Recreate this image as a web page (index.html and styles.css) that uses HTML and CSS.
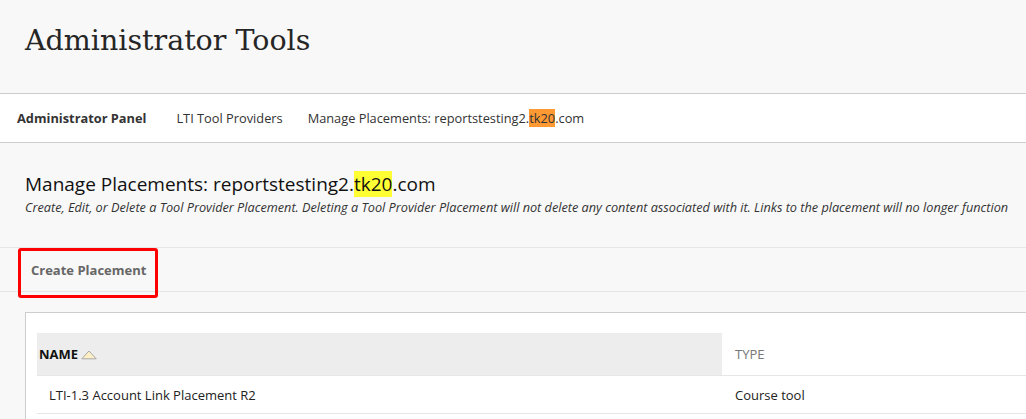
FILE: index.html
```html
<!DOCTYPE html>
<html lang="en">
<head>
  <meta charset="UTF-8">
  <title>Administrator Tools</title>
  <link rel="stylesheet" href="styles.css">
</head>
<body>
  <div class="page-head">
    <h1>Administrator Tools</h1>
  </div>

  <nav class="crumbs">
    <span class="crumb current">Administrator Panel</span>
    <span class="crumb">LTI Tool Providers</span>
    <span class="crumb">Manage Placements: reportstesting2.<mark class="hl-orange">tk20</mark>.com</span>
  </nav>

  <div class="content">
    <div class="title-block">
      <h2>Manage Placements: reportstesting2.<mark class="hl-yellow">tk20</mark>.com</h2>
      <p class="desc">Create, Edit, or Delete a Tool Provider Placement. Deleting a Tool Provider Placement will not delete any content associated with it. Links to the placement will no longer function</p>
    </div>

    <div class="action-bar">
      <span class="action">Create Placement</span>
      <div class="callout"></div>
    </div>

    <div class="list-wrap">
      <table class="list">
        <thead>
          <tr>
            <th class="col-name">NAME
              <svg class="sort" width="16" height="10" viewBox="0 0 16 10">
                <polygon points="8,1 15.2,8.8 0.8,8.8" fill="#fdf0c4" stroke="#a8a8a8" stroke-width="1"/>
              </svg>
            </th>
            <th class="col-type">TYPE</th>
          </tr>
        </thead>
        <tbody>
          <tr>
            <td class="col-name">LTI-1.3 Account Link Placement R2</td>
            <td class="col-type">Course tool</td>
          </tr>
        </tbody>
      </table>
    </div>
  </div>
</body>
</html>
```

FILE: styles.css
```css
body { margin: 0; font-family: "Open Sans", "Noto Sans", sans-serif; color: #222; background: #f8f8f8; overflow: hidden; }

.page-head { height: 93px; border-bottom: 1px solid #cdcdcd; }
.page-head h1 { margin: 0; padding: 22px 0 0 25px; font-family: "DejaVu Serif", "Liberation Serif", serif; font-weight: normal; font-size: 28.5px; line-height: 38px; color: #262626; }

.crumbs { display: flex; align-items: center; gap: 25px; height: 48px; background: #fff; border-bottom: 1px solid #cdcdcd; padding-left: 17px; font-size: 12.8px; color: #333; }
.crumb.current { font-weight: bold; color: #333; margin-right: 5px; }

mark { color: inherit; padding: 0; }
.hl-orange { background: #ff9933; }
.hl-yellow { background: #ffff33; }

.title-block { padding: 28px 0 0 25px; height: 105px; box-sizing: border-box; border-bottom: 1px solid #e6e6e6; }
.title-block h2 { margin: 0; font-weight: normal; font-size: 19px; line-height: 27px; color: #111; }
.desc { margin: 0; font-size: 12.7px; font-style: italic; color: #333; line-height: 19px; white-space: nowrap; }

.action-bar { position: relative; height: 43px; border-bottom: 1px solid #e6e6e6; display: flex; align-items: center; padding-left: 31px; }
.action { font-size: 13px; font-weight: bold; color: #666; }
.callout { position: absolute; left: 18px; top: 0; width: 134px; height: 44px; border: 3px solid #f00; border-radius: 3px; }

.list-wrap { margin: 20px 0 0 25px; background: #fff; border-left: 1px solid #cdcdcd; border-top: 1px solid #cdcdcd; padding: 20px 0 0 11px; height: 86px; overflow: hidden; }
.list { border-collapse: collapse; width: 100%; font-size: 13px; }
.list th { height: 42px; text-align: left; font-weight: normal; padding: 0; border-bottom: 1px solid #e6e6e6; }
.list th.col-name { background: #ededed; font-weight: bold; color: #111; padding-left: 2px; width: 683px; }
.list th.col-type { color: #777; padding-left: 13px; }
.sort { vertical-align: -1px; margin-left: 0; }
.list td { height: 37px; padding: 0; border-bottom: 1px solid #e6e6e6; color: #222; }
.list td.col-name { padding-left: 12px; }
.list td.col-type { padding-left: 13px; }
```
